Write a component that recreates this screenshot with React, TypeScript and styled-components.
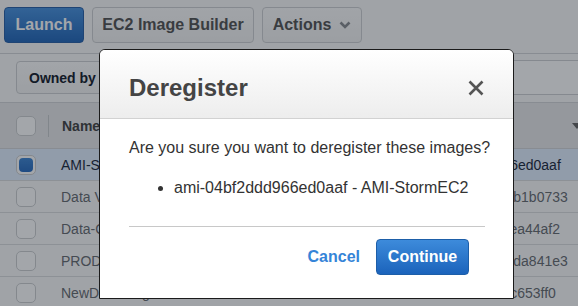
import React from 'react';
import styled, { createGlobalStyle } from 'styled-components';

const GlobalStyle = createGlobalStyle`
  html, body {
    margin: 0;
    padding: 0;
    background: #fbfbfb;
  }
  body {
    font-family: 'Liberation Sans', Arial, sans-serif;
  }
  * {
    box-sizing: border-box;
  }
`;

const images = [
  { name: 'AMI-StormEC2', id: 'ami-04bf2ddd966ed0aaf', selected: true },
  { name: 'Data Vault Server', id: 'ami-0e3d41c8d2b1b0733' },
  { name: 'Data-Cleanup', id: 'ami-07c5a19d3fea44af2' },
  { name: 'PROD-Web-Server', id: 'ami-0b6e2a8c41da841e3' },
  { name: 'NewDev-Image', id: 'ami-09f1e7a3b5c653ff0' },
];

export default function App() {
  return (
    <>
      <GlobalStyle />
      <Page>
        <Toolbar>
          <PrimaryButton $width={80}>Launch</PrimaryButton>
          <SecondaryButton $width={162}>EC2 Image Builder</SecondaryButton>
          <SecondaryButton $width={100}>
            Actions
            <Chevron viewBox="0 0 12 8">
              <path d="M1.5 1.5 L6 6 L10.5 1.5" />
            </Chevron>
          </SecondaryButton>
        </Toolbar>

        <FilterBar>
          <OwnedBy>Owned by me</OwnedBy>
          <SearchBox />
        </FilterBar>

        <TableHead>
          <CheckCell>
            <Checkbox />
            <HeadDivider />
          </CheckCell>
          <HeadLabel>Name</HeadLabel>
          <HeadLabel>AMI ID</HeadLabel>
          <SortCaret />
        </TableHead>

        {images.map((img) => (
          <Row key={img.id} $selected={img.selected}>
            <CheckCell>
              <Checkbox $checked={img.selected} />
            </CheckCell>
            <Cell $selected={img.selected}>{img.name}</Cell>
            <Cell $selected={img.selected}>{img.id}</Cell>
          </Row>
        ))}

        <Backdrop />

        <Dialog role="dialog" aria-labelledby="dereg-title">
          <DialogHeader>
            <DialogTitle id="dereg-title">Deregister</DialogTitle>
            <CloseButton aria-label="Close">
              <svg viewBox="0 0 18 18" width="18" height="18">
                <path d="M2.5 2.5 L15.5 15.5 M15.5 2.5 L2.5 15.5" />
              </svg>
            </CloseButton>
          </DialogHeader>
          <DialogBody>
            <Question>Are you sure you want to deregister these images?</Question>
            <ImageList>
              <li>ami-04bf2ddd966ed0aaf - AMI-StormEC2</li>
            </ImageList>
            <Rule />
            <Footer>
              <LinkButton>Cancel</LinkButton>
              <ContinueButton>Continue</ContinueButton>
            </Footer>
          </DialogBody>
        </Dialog>
      </Page>
    </>
  );
}

const Page = styled.div`
  position: relative;
  width: 578px;
  height: 306px;
  overflow: hidden;
  background: #fbfbfb;
`;

const Toolbar = styled.div`
  display: flex;
  gap: 8px;
  padding: 7px 4px 10px;
  border-bottom: 1px solid #d4d6d8;
`;

const BaseButton = styled.button<{ $width: number }>`
  width: ${(p) => p.$width}px;
  height: 36px;
  padding: 0;
  border-radius: 4px;
  font-family: 'Liberation Sans', Arial, sans-serif;
  font-size: 16px;
  font-weight: bold;
  display: inline-flex;
  align-items: center;
  justify-content: center;
  gap: 8px;
  cursor: pointer;
`;

const PrimaryButton = styled(BaseButton)`
  color: #fff;
  background: linear-gradient(#4a93df, #2568b9);
  border: 1px solid #2a62a8;
`;

const SecondaryButton = styled(BaseButton)`
  color: #555;
  background: linear-gradient(#fcfcfc, #f3f3f3);
  border: 1px solid #cfd1d3;
`;

const Chevron = styled.svg`
  width: 12px;
  height: 8px;
  fill: none;
  stroke: #8a8d91;
  stroke-width: 2.6;
`;

const FilterBar = styled.div`
  display: flex;
  align-items: center;
  gap: 10px;
  padding: 6px 0 7px 16px;
  border-bottom: 1px solid #d4d6d8;
`;

const OwnedBy = styled.div`
  width: 200px;
  height: 33px;
  padding: 0 12px;
  display: flex;
  align-items: center;
  border: 1px solid #cfd1d3;
  border-radius: 4px;
  background: linear-gradient(#fdfdfd, #f4f4f4);
  font-size: 14px;
  font-weight: bold;
  color: #16202c;
`;

const SearchBox = styled.div`
  flex: 1;
  height: 35px;
  margin-right: -4px;
  border: 1px solid #cfd1d3;
  background: #fff;
`;

const TableHead = styled.div`
  position: relative;
  display: grid;
  grid-template-columns: 46px 347px 1fr;
  align-items: center;
  height: 46px;
  padding-left: 16px;
  background: #e8e9ea;
  border-bottom: 1px solid #d4d6d8;
`;

const CheckCell = styled.div`
  display: flex;
  align-items: center;
  gap: 12px;
`;

const HeadDivider = styled.span`
  width: 1px;
  height: 22px;
  background: #c9cbcd;
`;

const HeadLabel = styled.span`
  font-size: 14px;
  font-weight: bold;
  color: #444;
`;

const SortCaret = styled.span`
  position: absolute;
  right: -4px;
  top: 20px;
  border-left: 5px solid transparent;
  border-right: 5px solid transparent;
  border-top: 6px solid #666;
`;

const Checkbox = styled.span<{ $checked?: boolean }>`
  width: 20px;
  height: 20px;
  padding: 2px;
  border: 1px solid #cdcfd1;
  border-radius: 5px;
  background: #fff;
  display: inline-flex;

  &::after {
    content: '';
    flex: 1;
    border-radius: 4px;
    background: ${(p) => (p.$checked ? 'linear-gradient(#3f86d3, #2a6cbf)' : 'transparent')};
  }
`;

const Row = styled.div<{ $selected?: boolean }>`
  display: grid;
  grid-template-columns: 45px 348px 1fr;
  align-items: center;
  height: 32px;
  padding-left: 16px;
  border-bottom: 1px solid #dcdedf;
  background: ${(p) => (p.$selected ? '#e3efff' : '#fbfbfb')};
`;

const Cell = styled.span<{ $selected?: boolean }>`
  font-size: 14px;
  white-space: nowrap;
  color: ${(p) => (p.$selected ? '#1c2a3e' : '#686c72')};
`;

const Backdrop = styled.div`
  position: absolute;
  inset: 0;
  background: rgba(12, 20, 32, 0.38);
`;

const Dialog = styled.div`
  position: absolute;
  left: 99px;
  top: 49px;
  width: 415px;
  height: 250px;
  background: #fff;
  border: 1px solid #1b1b1b;
  border-radius: 6px 6px 0 0;
  overflow: hidden;
`;

const DialogHeader = styled.div`
  display: flex;
  align-items: center;
  justify-content: space-between;
  padding: 24px 28px 16px 29px;
  background: linear-gradient(#ffffff, #ededed);
  border-bottom: 1px solid #d2d2d2;
`;

const DialogTitle = styled.h2`
  margin: 0;
  font-size: 24px;
  line-height: 28px;
  font-weight: bold;
  color: #444;
`;

const CloseButton = styled.button`
  padding: 0;
  border: 0;
  background: none;
  display: flex;
  cursor: pointer;

  svg {
    fill: none;
    stroke: #555;
    stroke-width: 2.6;
  }
`;

const DialogBody = styled.div`
  padding: 20px 28px 0 29px;
  font-size: 16px;
  line-height: 18px;
  color: #333;
`;

const Question = styled.p`
  margin: 0 0 22px;
  white-space: nowrap;
`;

const ImageList = styled.ul`
  margin: 0;
  padding-left: 45px;
  list-style: disc;
`;

const Rule = styled.hr`
  margin: 29px 0 12px;
  border: 0;
  border-top: 1px solid #c8c8c8;
`;

const Footer = styled.div`
  display: flex;
  justify-content: flex-end;
  align-items: center;
  gap: 16px;
  padding-right: 16px;
`;

const LinkButton = styled.button`
  padding: 0;
  border: 0;
  background: none;
  font-family: 'Liberation Sans', Arial, sans-serif;
  font-size: 16px;
  font-weight: bold;
  color: #3584d8;
  cursor: pointer;
`;

const ContinueButton = styled.button`
  width: 93px;
  height: 36px;
  border-radius: 4px;
  border: 1px solid #1d5ea8;
  background: linear-gradient(#3d8bdb, #1b63bb);
  font-family: 'Liberation Sans', Arial, sans-serif;
  font-size: 16px;
  font-weight: bold;
  color: #fff;
  cursor: pointer;
`;
